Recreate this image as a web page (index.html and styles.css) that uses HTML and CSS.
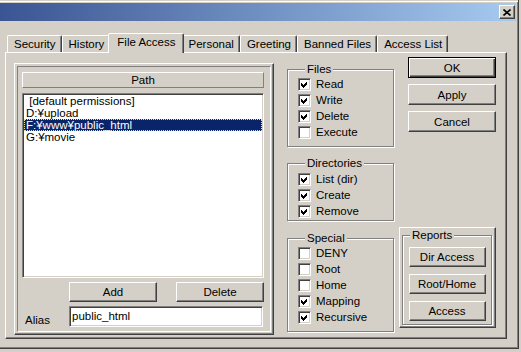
FILE: index.html
```html
<!DOCTYPE html>
<html lang="ja">
<head>
    <meta charset="UTF-8">
    <link rel="stylesheet" href="styles.css">
</head>
<body>
    <div class="window">
        <div class="titlebar">
            <span class="close-btn">
                <svg width="8" height="7" viewBox="0 0 8 7"><path d="M0.5 0.5 L7.5 6.5 M7.5 0.5 L0.5 6.5" stroke="#000" stroke-width="1.6" fill="none"/></svg>
            </span>
        </div>

        <div class="tabs">
            <div class="tab">Security</div>
            <div class="tab">History</div>
            <div class="tab active">File Access</div>
            <div class="tab">Personal</div>
            <div class="tab">Greeting</div>
            <div class="tab">Banned Files</div>
            <div class="tab">Access List</div>
        </div>

        <div class="panel">
            <div class="frame path-frame">
                <div class="frame-inner">
                    <div class="list-header">Path</div>
                    <div class="listbox">
                        <div class="item">&nbsp;[default permissions]</div>
                        <div class="item">D:¥upload</div>
                        <div class="item selected">F:¥www¥public_html</div>
                        <div class="item">G:¥movie</div>
                    </div>
                    <div class="list-buttons">
                        <button class="btn">Add</button>
                        <button class="btn">Delete</button>
                    </div>
                    <div class="alias-row">
                        <span class="alias-label">Alias</span>
                        <div class="textbox">public_html</div>
                    </div>
                </div>
            </div>

            <div class="options">
                <fieldset class="group files">
                    <legend>Files</legend>
                    <div class="check-row"><span class="check on"><svg viewBox="0 0 11 11"><polygon points="2,4 4,6 8,2 8,5 4,9 2,7"/></svg></span>Read</div>
                    <div class="check-row"><span class="check on"><svg viewBox="0 0 11 11"><polygon points="2,4 4,6 8,2 8,5 4,9 2,7"/></svg></span>Write</div>
                    <div class="check-row"><span class="check on"><svg viewBox="0 0 11 11"><polygon points="2,4 4,6 8,2 8,5 4,9 2,7"/></svg></span>Delete</div>
                    <div class="check-row"><span class="check"></span>Execute</div>
                </fieldset>

                <fieldset class="group dirs">
                    <legend>Directories</legend>
                    <div class="check-row"><span class="check on"><svg viewBox="0 0 11 11"><polygon points="2,4 4,6 8,2 8,5 4,9 2,7"/></svg></span>List (dir)</div>
                    <div class="check-row"><span class="check on"><svg viewBox="0 0 11 11"><polygon points="2,4 4,6 8,2 8,5 4,9 2,7"/></svg></span>Create</div>
                    <div class="check-row"><span class="check on"><svg viewBox="0 0 11 11"><polygon points="2,4 4,6 8,2 8,5 4,9 2,7"/></svg></span>Remove</div>
                </fieldset>

                <fieldset class="group special">
                    <legend>Special</legend>
                    <div class="check-row"><span class="check"></span>DENY</div>
                    <div class="check-row"><span class="check"></span>Root</div>
                    <div class="check-row"><span class="check"></span>Home</div>
                    <div class="check-row"><span class="check on"><svg viewBox="0 0 11 11"><polygon points="2,4 4,6 8,2 8,5 4,9 2,7"/></svg></span>Mapping</div>
                    <div class="check-row"><span class="check on"><svg viewBox="0 0 11 11"><polygon points="2,4 4,6 8,2 8,5 4,9 2,7"/></svg></span>Recursive</div>
                </fieldset>
            </div>

            <div class="actions">
                <button class="btn dialog-btn default">OK</button>
                <button class="btn dialog-btn">Apply</button>
                <button class="btn dialog-btn">Cancel</button>

                <div class="frame reports">
                    <fieldset class="group report-group">
                        <legend>Reports</legend>
                        <button class="btn report-btn">Dir Access</button>
                        <button class="btn report-btn">Root/Home</button>
                        <button class="btn report-btn">Access</button>
                    </fieldset>
                </div>
            </div>
        </div>
    </div>
</body>
</html>
```

FILE: styles.css
```css
body {
    margin: 0;
    background-color: #d4d0c8;
    font-family: "Liberation Sans", Arial, sans-serif;
    font-size: 11.5px;
    color: #000;
}

.window {
    width: 519px;
    height: 349px;
    box-sizing: border-box;
    padding-top: 3px;
    border-right: 1px solid #404040;
    border-bottom: 1px solid #404040;
    box-shadow: inset 0 1px #d4d0c8, inset 0 2px #fff, inset -1px -1px #808080;
}

/* title bar */
.titlebar {
    height: 18px;
    margin-right: 2px;
    padding-right: 1px;
    background: linear-gradient(to right, #3a5593, #a6caf0);
    display: flex;
    align-items: center;
    justify-content: flex-end;
}

.close-btn {
    width: 16px;
    height: 14px;
    box-sizing: border-box;
    background-color: #d4d0c8;
    border: 1px solid;
    border-color: #fff #404040 #404040 #fff;
    box-shadow: inset -1px -1px #808080;
    display: flex;
    align-items: center;
    justify-content: center;
}

.close-btn svg {
    display: block;
}

/* tabs */
.tabs {
    display: flex;
    align-items: flex-end;
    height: 19px;
    margin-top: 12px;
    padding-left: 7px;
}

.tab {
    height: 17px;
    box-sizing: border-box;
    padding: 0 5px 0 6px;
    border: 1px solid;
    border-bottom: none;
    border-color: #fff #404040 transparent #fff;
    border-radius: 2px 2px 0 0;
    box-shadow: inset -1px 0 #808080;
    line-height: 16px;
    white-space: nowrap;
}

.tab.active {
    height: 20px;
    margin: 0 -2px -1px;
    padding: 0 7px 0 8px;
    position: relative;
    z-index: 1;
    background-color: #d4d0c8;
}

/* tab page */
.panel {
    margin-left: 5px;
    width: 502px;
    height: 287px;
    box-sizing: border-box;
    border: 1px solid;
    border-color: #fff #404040 #404040 #fff;
    box-shadow: inset -1px -1px #808080;
    padding: 4px 0 0 8px;
    display: flex;
    align-items: flex-start;
}

/* raised frames */
.frame {
    box-sizing: border-box;
    border: 1px solid;
    border-color: #fff #404040 #404040 #fff;
    box-shadow: inset -1px -1px #808080;
}

.path-frame {
    width: 260px;
    margin-top: 6px;
    padding: 2px;
}

.frame-inner {
    border: 1px solid;
    border-color: #808080 #fff #fff #808080;
    padding: 5px 6px 4px 4px;
}

.list-header {
    height: 16px;
    box-sizing: border-box;
    border: 1px solid;
    border-color: #fff #808080 #808080 #fff;
    text-align: center;
    line-height: 14px;
}

.listbox {
    height: 185px;
    margin-top: 5px;
    box-sizing: border-box;
    padding: 1px;
    background-color: #fff;
    border: 1px solid;
    border-color: #808080 #fff #fff #808080;
    box-shadow: inset 1px 1px #404040, inset -1px -1px #d4d0c8;
}

.item {
    height: 12px;
    line-height: 12px;
    padding: 0 2px;
    white-space: nowrap;
}

.item.selected {
    background-color: #0a246a;
    color: #fff;
    outline: 1px dotted #e8e4a0;
    outline-offset: -1px;
}

.list-buttons {
    display: flex;
    gap: 19px;
    margin-top: 4px;
    padding-left: 47px;
}

.list-buttons .btn {
    width: 88px;
    height: 20px;
}

.alias-row {
    display: flex;
    align-items: flex-end;
    margin-top: 4px;
}

.alias-label {
    width: 44px;
    padding-left: 3px;
    line-height: 13px;
}

.textbox {
    width: 194px;
    height: 21px;
    box-sizing: border-box;
    padding: 1px 2px;
    background-color: #fff;
    border: 1px solid;
    border-color: #808080 #fff #fff #808080;
    box-shadow: inset 1px 1px #404040, inset -1px -1px #d4d0c8;
    line-height: 17px;
}

/* buttons */
.btn {
    box-sizing: border-box;
    margin: 0;
    padding: 0;
    background-color: #d4d0c8;
    border: 1px solid;
    border-color: #fff #404040 #404040 #fff;
    box-shadow: inset -1px -1px #808080;
    font-family: inherit;
    font-size: inherit;
    color: #000;
}

.btn.default {
    border-color: #000;
    box-shadow: inset 1px 1px #fff, inset -1px -1px #404040, inset -2px -2px #808080;
}

/* group boxes */
.options {
    width: 107px;
    margin-left: 13px;
    display: flex;
    flex-direction: column;
}

.group {
    margin: 0;
    min-width: 0;
    border: 1px solid #808080;
    box-shadow: 1px 1px #fff, inset 1px 1px #fff;
    padding: 0 0 6px 10px;
}

.group legend {
    margin-left: 7px;
    padding: 0 2px;
    line-height: 13px;
    background-color: #d4d0c8;
}

.files {
    margin-top: 6px;
}

.dirs {
    margin-top: 10px;
    padding-top: 1px;
    padding-bottom: 1px;
}

.special {
    margin-top: 11px;
}

.check-row {
    display: flex;
    align-items: center;
    gap: 5px;
    height: 16px;
    white-space: nowrap;
}

.check {
    width: 13px;
    height: 13px;
    flex: none;
    box-sizing: border-box;
    background-color: #fff;
    border: 1px solid;
    border-color: #808080 #fff #fff #808080;
    box-shadow: inset 1px 1px #404040, inset -1px -1px #d4d0c8;
}

.check svg {
    display: block;
    width: 11px;
    height: 11px;
    shape-rendering: crispEdges;
}

/* right column */
.actions {
    width: 97px;
    margin-left: 5px;
    display: flex;
    flex-direction: column;
    align-items: flex-end;
    gap: 6px;
}

.dialog-btn {
    width: 88px;
    height: 21px;
}

.reports {
    width: 97px;
    margin-top: 89px;
    padding: 1px 3px 2px 2px;
}

.report-group {
    display: flex;
    flex-direction: column;
    align-items: center;
    gap: 7px;
    padding: 5px 0 3px;
}

.report-btn {
    width: 77px;
    height: 20px;
}
```
